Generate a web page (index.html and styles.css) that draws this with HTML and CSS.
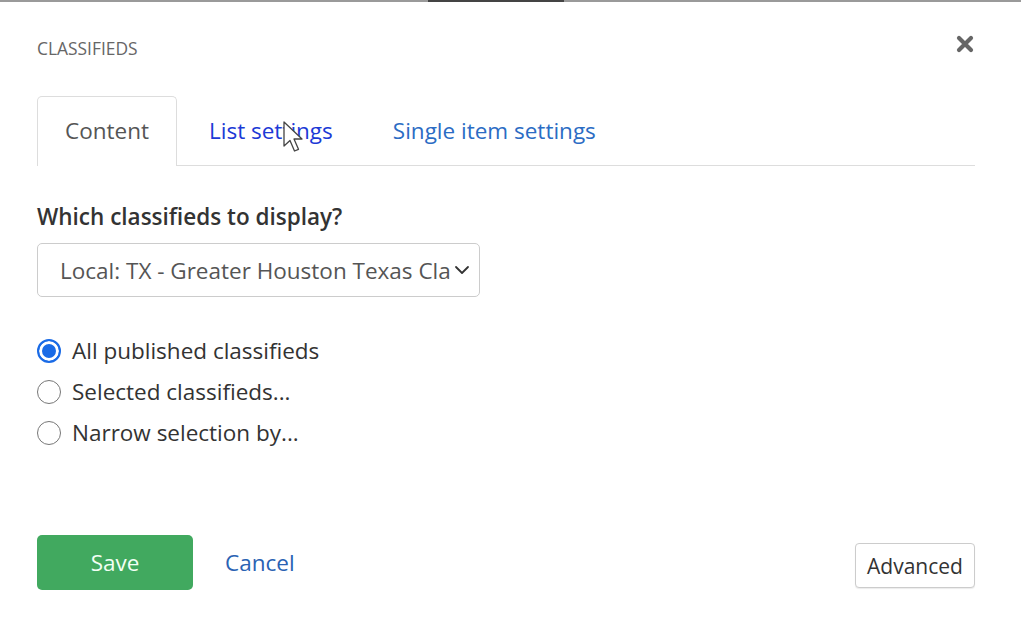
FILE: index.html
```html
<!DOCTYPE html>
<html lang="en">
<head>
<meta charset="utf-8">
<title>Classifieds</title>
<link rel="stylesheet" href="styles.css">
</head>
<body>
<div class="topbar"><span class="topbar-mark"></span></div>
<div class="dialog">
  <div class="header">
    <div class="title">CLASSIFIEDS</div>
    <button class="close" aria-label="Close">
      <svg width="18" height="18" viewBox="0 0 18 18"><path d="M3 3 L15 15 M15 3 L3 15" stroke="#666" stroke-width="4.2" stroke-linecap="round"/></svg>
    </button>
  </div>

  <div class="tabs">
    <div class="tab active">Content</div>
    <div class="tab hover">List settings</div>
    <div class="tab">Single item settings</div>
  </div>

  <div class="field-label">Which classifieds to display?</div>
  <div class="select">
    <span class="select-text">Local: TX - Greater Houston Texas Classifieds</span>
    <svg class="chev" width="16" height="10" viewBox="0 0 16 10"><path d="M2 2 L8 8 L14 2" fill="none" stroke="#333" stroke-width="1.8" stroke-linecap="round" stroke-linejoin="round"/></svg>
  </div>

  <div class="radios">
    <label class="radio-row"><span class="radio checked"></span><span>All published classifieds</span></label>
    <label class="radio-row"><span class="radio"></span><span>Selected classifieds...</span></label>
    <label class="radio-row"><span class="radio"></span><span>Narrow selection by...</span></label>
  </div>

  <div class="actions">
    <button class="btn-save">Save</button>
    <a class="cancel" href="#">Cancel</a>
    <button class="btn-adv">Advanced</button>
  </div>
</div>
<svg class="cursor" width="22" height="34" viewBox="0 0 22 34"><path d="M1 1 L1 25 L7 19.5 L11.5 30 L15.5 28.3 L11 18 L19 18 Z" fill="#fff" stroke="#444" stroke-width="1.3" stroke-linejoin="round"/></svg>
</body>
</html>
```

FILE: styles.css
```css
html, body {
  margin: 0;
  padding: 0;
  background: #fff;
}
body {
  font-family: "Open Sans", "Noto Sans", sans-serif;
  color: #333;
  width: 1021px;
  height: 625px;
  overflow: hidden;
  position: relative;
}
.topbar {
  height: 2px;
  background: #9a9a9a;
  position: relative;
}
.topbar-mark {
  position: absolute;
  left: 428px;
  width: 136px;
  top: 0;
  height: 2px;
  background: #444;
}
.dialog {
  padding: 0 46px 0 37px;
}
.header {
  display: flex;
  justify-content: space-between;
  align-items: flex-start;
  padding-top: 35px;
  height: 58px;
  box-sizing: border-box;
}
.title {
  font-size: 17.4px;
  line-height: 22px;
  color: #666;
}
.close {
  border: none;
  background: none;
  padding: 0;
  margin-top: -2px;
  margin-right: 1px;
  width: 18px;
  height: 18px;
  cursor: pointer;
}
.tabs {
  display: flex;
  margin-top: 36px;
  border-bottom: 1px solid #ddd;
  height: 69px;
}
.tab {
  font-size: 22.5px;
  line-height: 30px;
  padding: 19px 29px;
  color: #2b6cc4;
  border: 1px solid transparent;
  border-bottom: none;
  border-radius: 5px 5px 0 0;
  height: 69px;
  box-sizing: border-box;
  white-space: nowrap;
}
.tab.active {
  color: #555;
  border-color: #ddd;
  background: #fff;
  height: 70px;
  margin-bottom: -1px;
  padding: 19px 27px;
}
.tab.hover {
  color: #1c3ad6;
  padding-left: 31px;
}
.field-label {
  margin-top: 36px;
  font-size: 22.5px;
  line-height: 30px;
  font-weight: 600;
  color: #333;
}
.select {
  margin-top: 11px;
  width: 443px;
  height: 54px;
  box-sizing: border-box;
  border: 1px solid #ccc;
  border-radius: 5px;
  display: flex;
  align-items: center;
  padding: 0 9px 0 22px;
}
.select-text {
  flex: 1;
  font-size: 22.5px;
  color: #555;
  white-space: nowrap;
  overflow: hidden;
}
.chev {
  margin-left: 3px;
  flex: none;
}
.radios {
  margin-top: 33px;
  display: flex;
  flex-direction: column;
}
.radio-row {
  display: flex;
  align-items: center;
  height: 41px;
  font-size: 22.5px;
  color: #333;
  gap: 11px;
}
.radio {
  width: 24px;
  height: 24px;
  box-sizing: border-box;
  border: 1.5px solid #777;
  border-radius: 50%;
  flex: none;
  background: #fff;
}
.radio.checked {
  border: 2px solid #1a6be6;
  box-shadow: inset 0 0 0 3px #fff;
  background: #1a6be6;
}
.actions {
  display: flex;
  align-items: center;
  margin-top: 82px;
}
.btn-save {
  width: 156px;
  height: 55px;
  background: #41a95f;
  border: none;
  border-radius: 5px;
  color: #f2fff4;
  font-family: inherit;
  font-size: 22.5px;
  cursor: pointer;
}
.cancel {
  margin-left: 32px;
  font-size: 22.5px;
  color: #2a62b3;
  text-decoration: none;
}
.btn-adv {
  margin-left: auto;
  margin-top: 6px;
  width: 120px;
  height: 45px;
  background: #fff;
  border: 1px solid #ccc;
  border-radius: 4px;
  box-shadow: 0 1px 1px rgba(0,0,0,0.08);
  font-family: inherit;
  font-size: 21px;
  color: #333;
  padding: 0;
}
.cursor {
  position: absolute;
  left: 283px;
  top: 121px;
}
```
